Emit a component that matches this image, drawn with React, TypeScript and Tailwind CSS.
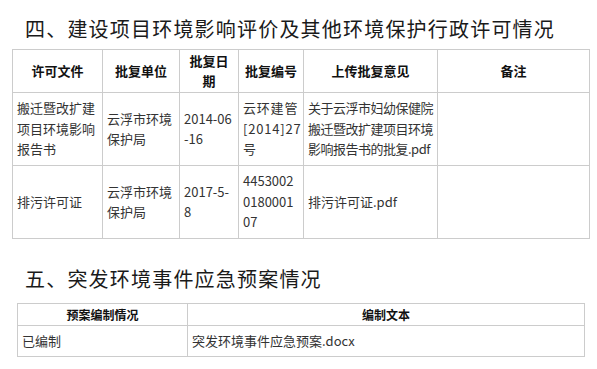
export default function App() {
  const font = { fontFamily: '"Noto Sans CJK SC", "Liberation Sans", sans-serif' };
  const th = "border border-[#cccccc] font-bold text-[13px] text-[#111] text-center align-middle leading-[20px] px-[4px]";
  const td = "border border-[#cccccc] text-[13px] text-[#333] align-middle leading-[20.5px] px-[4px] whitespace-nowrap";
  return (
    <div className="w-[597px] h-[369px] bg-white overflow-hidden" style={font}>
      <h2 className="pl-[25px] pt-[14px] text-[20px] leading-[30px] tracking-[1.2px] text-[#1a1a1a]">
        四、建设项目环境影响评价及其他环境保护行政许可情况
      </h2>
      <table className="ml-[12px] mt-[5px] border-collapse table-fixed w-[577px]">
        <colgroup>
          <col className="w-[90px]" />
          <col className="w-[77px]" />
          <col className="w-[59px]" />
          <col className="w-[65px]" />
          <col className="w-[134px]" />
          <col className="w-[152px]" />
        </colgroup>
        <tbody>
          <tr className="h-[43px]">
            <td className={th}>许可文件</td>
            <td className={th}>批复单位</td>
            <td className={th}>批复日<br />期</td>
            <td className={th}>批复编号</td>
            <td className={th}>上传批复意见</td>
            <td className={th}>备注</td>
          </tr>
          <tr className="h-[73px]">
            <td className={td}>搬迁暨改扩建<br />项目环境影响<br />报告书</td>
            <td className={td}>云浮市环境<br />保护局</td>
            <td className={td}>2014-06<br />-16</td>
            <td className={td + " tracking-[0.8px]"}>云环建管<br />[2014]27<br />号</td>
            <td className={td + " tracking-[-0.5px]"}>关于云浮市妇幼保健院<br />搬迁暨改扩建项目环境<br />影响报告书的批复.pdf</td>
            <td className={td}></td>
          </tr>
          <tr className="h-[73px]">
            <td className={td}>排污许可证</td>
            <td className={td}>云浮市环境<br />保护局</td>
            <td className={td}>2017-5-<br />8</td>
            <td className={td}>4453002<br />0180001<br />07</td>
            <td className={td}>排污许可证.pdf</td>
            <td className={td}></td>
          </tr>
        </tbody>
      </table>
      <h2 className="pl-[25px] mt-[25px] text-[20px] leading-[30px] tracking-[1.2px] text-[#1a1a1a]">
        五、突发环境事件应急预案情况
      </h2>
      <table className="ml-[17px] mt-[9px] border-collapse table-fixed w-[567px]">
        <colgroup>
          <col className="w-[170px]" />
          <col className="w-[397px]" />
        </colgroup>
        <tbody>
          <tr className="h-[22px]">
            <td className="border border-[#cccccc] font-bold text-[12px] text-[#111] text-center leading-[20px]">预案编制情况</td>
            <td className="border border-[#cccccc] font-bold text-[12px] text-[#111] text-center leading-[20px]">编制文本</td>
          </tr>
          <tr className="h-[31px]">
            <td className={td}>已编制</td>
            <td className={td}>突发环境事件应急预案.docx</td>
          </tr>
        </tbody>
      </table>
    </div>
  );
}
